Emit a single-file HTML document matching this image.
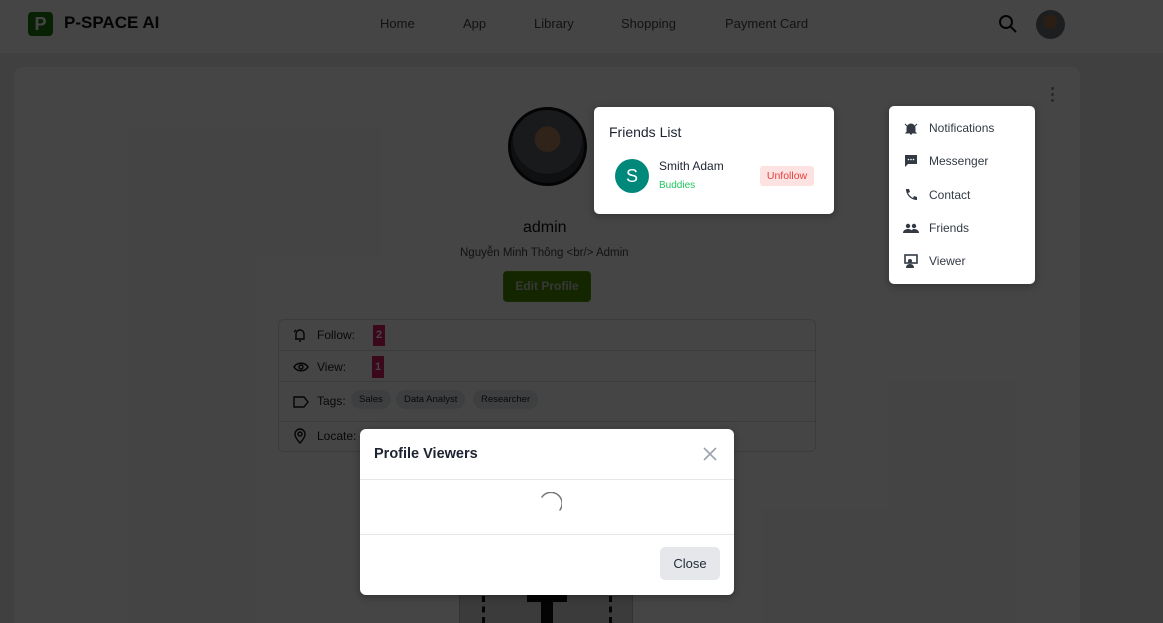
<!DOCTYPE html>
<html><head><meta charset="utf-8"><style>
*{box-sizing:border-box;margin:0;padding:0}
html{background:#ececee;overflow:hidden;height:623px}
body{width:1163px;height:623px;overflow:hidden;font-family:"Liberation Sans","Noto Sans CJK JP",sans-serif;position:relative;background:#ececee}
.hdr{position:absolute;left:0;top:0;width:1163px;height:53px;background:#ffffff}
.logo{position:absolute;left:28px;top:12px;width:25px;height:24px;background:#1f7a12;border-radius:4px;color:#fff;font-weight:bold;font-size:18px;text-align:center;line-height:24px}
.brand{position:absolute;left:64px;top:13px;font-weight:bold;font-size:17px;color:#111}
.nav{position:absolute;top:16px;font-size:13px;color:#444}
.card{position:absolute;left:14px;top:67px;width:1066px;height:556px;background:#fdfdfd;border-radius:8px 8px 0 0}
.av{position:absolute;left:508px;top:107px;width:79px;height:79px;border-radius:50%;border:3px solid #111;background:radial-gradient(circle at 50% 40%,#b08060 0 22%,#5a6068 23% 60%,#3a3e44 61%)}
.t{position:absolute;color:#111}
.tbl{position:absolute;left:278px;top:319px;width:538px;height:133px;border:1px solid #dcdcdc;border-radius:6px}
.row{position:absolute;left:0;width:100%;border-bottom:1px solid #dcdcdc}
.lbl{position:absolute;left:38px;font-size:12px;color:#222}
.badge{position:absolute;background:#d81b60;color:#fff;font-size:11px;font-weight:bold;width:12px;text-align:center}
.tag{position:absolute;background:#e6e8ec;border-radius:10px;font-size:9.5px;color:#222;padding:4px 8px}
.ov{position:absolute;left:0;top:0;width:1163px;height:623px;background:rgba(0,0,0,0.73)}
.pop{position:absolute;background:#fff;border-radius:5px;box-shadow:0 2px 8px rgba(0,0,0,.3)}
.mi{position:absolute;left:40px;font-size:12px;color:#333a44}
.ic{position:absolute;left:14px;width:16px;height:14px}
</style></head><body>
<div class="hdr">
<div class="logo">P</div><div class="brand">P-SPACE AI</div>
<div class="nav" style="left:380px">Home</div>
<div class="nav" style="left:463px">App</div>
<div class="nav" style="left:534px">Library</div>
<div class="nav" style="left:621px">Shopping</div>
<div class="nav" style="left:725px">Payment Card</div>
<svg style="position:absolute;left:998px;top:14px" width="20" height="20" viewBox="0 0 20 20"><circle cx="8" cy="8" r="6" fill="none" stroke="#111" stroke-width="2"/><path d="M12.5 12.5L18 18" stroke="#111" stroke-width="2"/></svg>
<div style="position:absolute;left:1036px;top:10px;width:29px;height:29px;border-radius:50%;background:radial-gradient(circle at 50% 40%,#a07050 0 30%,#6a7078 31%)"></div>
</div>
<div class="card"></div>
<div style="position:absolute;left:1051px;top:87px;width:4px">
<div style="width:3px;height:3px;border-radius:50%;background:#8a94a6;margin-bottom:3px"></div><div style="width:3px;height:3px;border-radius:50%;background:#8a94a6;margin-bottom:3px"></div><div style="width:3px;height:3px;border-radius:50%;background:#8a94a6"></div></div>
<div class="av"></div>
<div class="t" style="left:523px;top:219px;font-size:16px">admin</div>
<div class="t" style="left:460px;top:247px;font-size:11.5px;color:#444">Nguyễn Minh Thông &lt;br/&gt; Admin</div>
<div style="position:absolute;left:503px;top:271px;width:88px;height:31px;background:#4c8c00;border:1px solid #5aa000;border-radius:4px;color:#ccc;font-size:12px;font-weight:bold;text-align:center;line-height:29px">Edit Profile</div>
<div class="tbl">
<div class="row" style="top:0;height:31px"><div class="lbl" style="top:8px">Follow:</div><div class="badge" style="left:94px;top:5px;height:21px;line-height:21px">2</div></div>
<div class="row" style="top:31px;height:31px"><div class="lbl" style="top:9px">View:</div><div class="badge" style="left:93px;top:5px;height:22px;line-height:22px">1</div></div>
<div class="row" style="top:62px;height:40px"><div class="lbl" style="top:12px">Tags:</div>
<div class="tag" style="left:72px;top:8px">Sales</div><div class="tag" style="left:117px;top:8px">Data Analyst</div><div class="tag" style="left:194px;top:8px">Researcher</div></div>
<div class="lbl" style="top:109px">Locate:</div>
<svg style="position:absolute;left:14px;top:7px" width="14" height="16" viewBox="0 0 14 16" fill="none" stroke="#111" stroke-width="1.4"><path d="M3 12V7a4 4 0 018 0v5H2M6 14h2M3 3L1 5"/></svg>
<svg style="position:absolute;left:14px;top:41px" width="16" height="12" viewBox="0 0 16 12" fill="none" stroke="#111" stroke-width="1.4"><path d="M1 6c3-5 11-5 14 0-3 5-11 5-14 0z"/><circle cx="8" cy="6" r="2"/></svg>
<svg style="position:absolute;left:14px;top:76px" width="16" height="12" viewBox="0 0 16 12" fill="none" stroke="#111" stroke-width="1.4"><path d="M1 1h10l4 5-4 5H1z"/></svg>
<svg style="position:absolute;left:14px;top:108px" width="14" height="16" viewBox="0 0 14 16" fill="none" stroke="#111" stroke-width="1.4"><path d="M7 15s5-5 5-9a5 5 0 00-10 0c0 4 5 9 5 9z"/><circle cx="7" cy="6" r="2"/></svg>
</div>
<div style="position:absolute;left:459px;top:590px;width:174px;height:33px;background:#d8d8da;border-left:1px solid #bbb;border-right:1px solid #bbb"></div>
<div style="position:absolute;left:482px;top:596px;width:130px;height:27px;border-left:3px dashed #111;border-right:3px dashed #111"></div>
<div style="position:absolute;left:527px;top:594px;width:40px;height:8px;background:#111"></div>
<div style="position:absolute;left:541px;top:600px;width:12px;height:23px;background:#111"></div>

<div class="ov"></div>

<div class="pop" style="left:594px;top:107px;width:240px;height:107px">
<div style="position:absolute;left:15px;top:17px;font-size:14px;color:#1d2330">Friends List</div>
<div style="position:absolute;left:21px;top:52px;width:34px;height:34px;border-radius:50%;background:#00897b;color:#fff;font-size:18px;text-align:center;line-height:34px">S</div>
<div style="position:absolute;left:65px;top:52px;font-size:12px;color:#1d2330">Smith Adam</div>
<div style="position:absolute;left:65px;top:73px;font-size:10px;color:#22c55e">Buddies</div>
<div style="position:absolute;left:166px;top:59px;width:54px;height:20px;background:#fde2e2;border-radius:3px;color:#e53e3e;font-size:10.5px;text-align:center;line-height:20px">Unfollow</div>
</div>

<div class="pop" style="left:889px;top:106px;width:146px;height:178px">
<svg class="ic" style="top:15px" viewBox="0 0 16 14"><path d="M4 11V7a4 4 0 018 0v4l1 1H3zM7 13h2M2 3l2 2M14 3l-2 2" fill="#333a44" stroke="#333a44" stroke-width="1"/></svg>
<div class="mi" style="top:15px">Notifications</div>
<svg class="ic" style="top:48px" viewBox="0 0 16 14"><path d="M2 1h12v9H5l-3 3z" fill="#333a44"/><circle cx="5.5" cy="5.5" r=".8" fill="#fff"/><circle cx="8" cy="5.5" r=".8" fill="#fff"/><circle cx="10.5" cy="5.5" r=".8" fill="#fff"/></svg>
<div class="mi" style="top:48px">Messenger</div>
<svg class="ic" style="top:82px" viewBox="0 0 16 14"><path d="M3 1l3 0 1 3-2 1c1 2 3 4 5 5l1-2 3 1v3c-6 0-11-5-11-11z" fill="#333a44"/></svg>
<div class="mi" style="top:82px">Contact</div>
<svg class="ic" style="top:115px" viewBox="0 0 16 14"><circle cx="5" cy="5" r="2.2" fill="#333a44"/><circle cx="11" cy="5" r="2.2" fill="#333a44"/><path d="M0 12c0-3 3-4 5-4s5 1 5 4zM8 12c0-2 1-4 3-4s5 1 5 4z" fill="#333a44"/></svg>
<div class="mi" style="top:115px">Friends</div>
<svg class="ic" style="top:148px" viewBox="0 0 16 14"><rect x="2" y="1" width="12" height="8" fill="none" stroke="#333a44" stroke-width="1.6"/><circle cx="7" cy="7" r="2" fill="#333a44"/><path d="M3 14c0-3 2-4 4-4s4 1 4 4z" fill="#333a44"/></svg>
<div class="mi" style="top:148px">Viewer</div>
</div>

<div class="pop" style="left:360px;top:429px;width:374px;height:166px;border-radius:6px">
<div style="position:absolute;left:14px;top:17px;font-size:14.5px;font-weight:bold;color:#1d2330">Profile Viewers</div>
<svg style="position:absolute;left:342px;top:17px" width="16" height="16" viewBox="0 0 16 16"><path d="M2 2l12 12M14 2L2 14" stroke="#9ca3af" stroke-width="1.6"/></svg>
<div style="position:absolute;left:0;top:50px;width:100%;border-top:1px solid #e5e7eb"></div>
<div style="position:absolute;left:0;top:105px;width:100%;border-top:1px solid #e5e7eb"></div>
<div style="position:absolute;left:300px;top:118px;width:60px;height:33px;background:#e5e7eb;border-radius:5px;font-size:13px;color:#1f2937;text-align:center;line-height:33px">Close</div>
</div>
<svg style="position:absolute;left:536px;top:492px" width="26" height="26" viewBox="0 0 26 26"><path d="M6 5A9 9 0 0124 18" fill="none" stroke="#777" stroke-width="1.5" stroke-linecap="round"/></svg>
</body></html>
